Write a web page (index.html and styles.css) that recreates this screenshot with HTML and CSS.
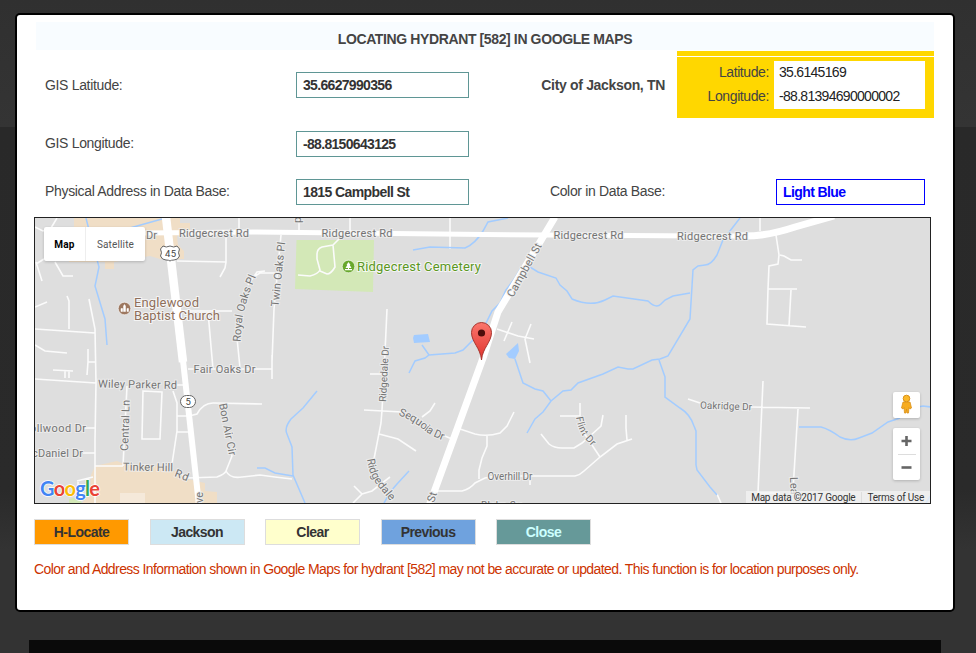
FILE: index.html
```html
<!DOCTYPE html>
<html lang="en">
<head>
<meta charset="utf-8">
<title>Locating Hydrant</title>
<link rel="stylesheet" href="styles.css">
</head>
<body>
<main class="dialog">
  <h1 class="title">LOCATING HYDRANT [582] IN GOOGLE MAPS</h1>
  <div class="form">
    <div class="label first">GIS Latitude:</div>
    <div class="field">35.6627990356</div>
    <div class="label first right city">City of Jackson, TN</div>
    <div class="coords">
      <div class="coords-labels"><span>Latitude:</span><span>Longitude:</span></div>
      <div class="coords-values"><span>35.6145169</span><span>-88.81394690000002</span></div>
    </div>
    <div class="label">GIS Longitude:</div>
    <div class="field">-88.8150643125</div>
    <div></div><div></div>
    <div class="label">Physical Address in Data Base:</div>
    <div class="field words">1815 Campbell St</div>
    <div class="label right">Color in Data Base:</div>
    <div class="field words color">Light Blue</div>
  </div>

  <section class="map">
    <svg class="map-canvas" viewBox="35 218 895 285" width="895" height="285">
      <rect x="35" y="218" width="895" height="285" fill="#dedede"/>
      <g fill="#f0dec6">
        <path d="M74 218H180V223H190V232L177 236L178 245L184 251V259L160 259L150 256L114 262V269H105V262H69V256H74Z"/>
        <path d="M91 475L95 466L117 461L124 464L160 466L180 473L188 479L205 483V491L217 492V503H82L90 494Z"/>
      </g>
      <path d="M120 493H145V503H120Z" fill="#f5e9da"/>
      <path d="M296.500 240H374L373 292L295 289ZM69 499L78 497L82 503H69Z" fill="#d3e8b7"/>
      <g class="minor">
        <path d="M57 218L51 228L43 231L35 227M36 264L44 259M36 262L42 281M55 262L63 276H73M35 307L47 302M67 296L69 301V329M35 329L95 333M89 299L95 329L96 383L95 440V503M35 345L45 351L67 353M88 349V362L87 375M88 362H95M53 370L73 371M65 371V378M69 371V378M35 379L96 383M177 385H184M83 428H95M83 453H95"/>
        <path d="M143 391L162 392L160 439L142 439ZM127 386L123 466M173 391L177 403V431L172 464M177 416H188M177 432H189M189 416L197 414Q203 403 213 403L262 404M95 466H123M180 473L187 478L217 477Q225 474 226 471L232 456L230 448M226 471Q230 479 242 477L260 475L275 477L292 479M77 481L93 477M78 482V490L86 496"/>
        <path d="M177 261L226 262V237M226 262L225 268L220 277M239 218V232M265 271L257 272L248 285M237 338L240 368M183 311H232M208 312L213 369M188 369H272M272 355V379M281 235L274 309L272 362M255 276L260 273H275M299 218V232M350 218V231M450 218V249"/>
        <path d="M339 239L333 245L322 247Q317 249 317 254V259L320 270Q318 274 310 276L298 275M333 245L335 267Q331 274 327 274L320 271"/>
        <path d="M387 309L384 374L382 410L381 423L374 459M370 374H382M364 410L402 412M379 434L398 439L416 451M440 434L452 439M435 403L430 411L422 417M354 486L362 494L353 503M362 494L372 491L390 477"/>
        <path d="M497 329L518 336L534 339M512 322L504 341M531 324L525 339L530 363M460 429L475 434Q487 437 500 433L507 426L514 412M487 436V446L482 458L479 470V479M435 491H462Q470 489 475 483L485 478L496 476H575Q580 475 584 471L600 457L617 444L632 439M626 415V428L627 440M530 476V485M600 457L582 430M541 434L549 444Q554 448 562 448H574L582 443L590 436L601 426L603 415M560 416H580V403"/>
        <path d="M688 399L700 403M760 218V231M776 235L779 255L778 264L769 266L768 289L767 324L806 327M780 255L784 256L791 260H802M768 289H797M791 290L789 326M763 381L758 493L780 493M750 407L810 408M798 409L793 490M717 494L721 503"/>
      </g>
      <g class="water">
        <path d="M86 218L89 230L99 267L95 286L105 319L107 345M112 233L162 219M317 391L303 408L291 419Q284 428 287 434L292 447L293 475L305 503M257 468H265L275 473L293 476M409 471L397 484L391 491L384 503"/>
        <path d="M413 250L430 247L465 248Q475 244 483 231L488 222L508 218M409 373L415 361L425 358L429 355L455 353L463 350L473 340L486 323L492 311L500 303L506 290L515 278L521 268L530 267L538 272L556 278L560 285L567 291L572 299Q591 307 605 300L613 296L648 301Q656 309 661 304L665 300L673 296L690 293M422 345L429 355"/>
        <path d="M740 218L723 240L717 255Q711 265 705 265L698 266L693 270L690 319L668 356L660 359L652 360L633 369H628L618 367L603 374L578 383L571 390L563 391L551 401L543 412L535 419L527 433M515 359L523 383L535 389L543 391L551 401M659 360L665 377V397L680 408Q690 414 694 426L696 431L696 465L697 470L710 487L717 495M799 427H821Q829 429 840 437Q850 442 859 438L872 433L888 422L900 418M918 407L923 406L931 407M926 503L930 496"/>
      </g>
      <path d="M414 335L428 334L430 342L414 343L413 338ZM506 354L518 343L519 351L515 359L509 358Z" fill="#a3ccff"/>
      <g class="major">
        <path d="M145 233L255 232L485 234.600L705 236L758 236" stroke-width="5"/>
        <path d="M740 236Q765 237 795 227L834 216" stroke-width="7"/>
        <path d="M166 217L183 362" stroke-width="8.500"/>
        <path d="M182.500 356L199 505" stroke-width="6"/>
        <path d="M555 217L498 312L483 358L429 506" stroke-width="7"/>
      </g>
      <g class="shield">
        <path d="M163 246Q166 248 170 246Q174 248 177 246L179.500 249Q177.500 253 179.500 256Q178 260 174 260Q171 260 170 261Q169 260 166 260Q162 260 160.500 256Q162.500 253 160.500 249Z"/>
        <rect x="180.500" y="395.500" width="15" height="12" rx="6"/>
      </g>
      <g class="route">
        <text x="165" y="257" textLength="11">45</text>
        <text x="185.500" y="405">5</text>
      </g>
      <g class="road-label">
        <text x="146" y="238.500" textLength="11">Dr</text>
        <text x="179" y="236.500" textLength="70">Ridgecrest Rd</text>
        <text x="321.500" y="237" textLength="71">Ridgecrest Rd</text>
        <text x="553.500" y="239" textLength="70">Ridgecrest Rd</text>
        <text x="677" y="240" textLength="71">Ridgecrest Rd</text>
        <text x="98" y="387.500" textLength="79" transform="rotate(1 98 388)">Wiley Parker Rd</text>
        <text x="193.500" y="373" textLength="62">Fair Oaks Dr</text>
        <text x="30" y="431.500" textLength="56">ollwood Dr</text>
        <text x="32" y="456.500" textLength="51">cDaniel Dr</text>
        <text x="123" y="470.500" textLength="50" transform="rotate(1 123 471)">Tinker Hill</text>
        <text x="174" y="476" textLength="14" transform="rotate(22 174 476)">Rd</text>
        <text transform="translate(128 451) rotate(-88)" textLength="51">Central Ln</text>
        <text transform="translate(219 404) rotate(79)" textLength="53">Bon Air Cir</text>
        <text transform="translate(278.500 307) rotate(-84)" textLength="65">Twin Oaks Pl</text>
        <text><textPath href="#royal-oaks" textLength="68">Royal Oaks Pl</textPath></text>
        <text transform="translate(301 223) rotate(-90)">p</text>
        <text class="small" transform="translate(386 402) rotate(-87)" textLength="56">Ridgedale Dr</text>
        <text><textPath href="#ridgedale" textLength="49">Ridgedale</textPath></text>
        <text><textPath href="#sequoia" textLength="52">Sequoia Dr</textPath></text>
        <text transform="translate(513 298) rotate(-61)" textLength="60">Campbell St</text>
        <text transform="translate(434 503) rotate(-72)">St</text>
        <text transform="translate(203 503) rotate(-90)" x="-6">ave</text>
        <text class="small"><textPath href="#flint" textLength="34">Flint Dr</textPath></text>
        <text class="small" x="487.500" y="480" textLength="45">Overhill Dr</text>
        <text class="small" x="481" y="509" textLength="40">Blake Cv</text>
        <text class="small" x="700" y="408.500" textLength="52" transform="rotate(2 700 408)">Oakridge Dr</text>
        <text transform="translate(790 477) rotate(88)">Lea</text>
      </g>
      <g class="place">
        <text x="134" y="307" textLength="65" fill="#8f6f5b">Englewood</text>
        <text x="134" y="320" textLength="86" fill="#8f6f5b">Baptist Church</text>
        <text x="357" y="271" textLength="124" fill="#5b9722">Ridgecrest Cemetery</text>
      </g>
      <circle cx="124.500" cy="308.500" r="6.300" fill="#9d7860" stroke="#fff" stroke-opacity=".6"/>
      <path d="M121 311.500V308.500H122.500V311.500ZM123.500 311.500V306L124.500 304.500L125.500 306V311.500ZM127 311.500V308.500H128.500V311.500Z" fill="#fff" stroke="#fff" stroke-width=".5"/>
      <circle cx="348.500" cy="266.500" r="6.300" fill="#68a82c" stroke="#fff" stroke-opacity=".6"/>
      <path d="M348.500 262L350.500 265H349.700L351.500 268H345.500L347.300 265H346.500ZM348 268H349V269H352V270.300H345V269H348Z" fill="#fff"/>
      <path d="M481.500 360C480.500 348 471.500 342 471.500 332.500A10 10 0 0 1 491.500 332.500C491.500 342 482.500 348 481.500 360Z" fill="url(#pin)" stroke="#a8352e"/>
      <circle cx="481.500" cy="333" r="3.600" fill="#4e0d0b"/>
      <text class="google" x="40" y="496" textLength="60"><tspan fill="#4285f4">G</tspan><tspan fill="#ea4335">o</tspan><tspan fill="#fbbc05">o</tspan><tspan fill="#4285f4">g</tspan><tspan fill="#34a853">l</tspan><tspan fill="#ea4335">e</tspan></text>
      <defs>
        <linearGradient id="pin" x1="0" y1="0" x2="0" y2="1"><stop offset="0" stop-color="#fb766d"/><stop offset="1" stop-color="#df312b"/></linearGradient>
        <path id="royal-oaks" d="M240.500 342L242 322Q244 305 257 274"/>
        <path id="ridgedale" d="M367 459Q369 475 378 486L396 508"/>
        <path id="sequoia" d="M398 415Q414 421 424 430Q432 437 448 442"/>
        <path id="flint" d="M576 417Q578 431 586 440L598 453"/>
      </defs>
    </svg>
    <div class="map-types"><b>Map</b><span>Satellite</span></div>
    <div class="map-controls">
      <div class="control">
        <svg width="27" height="26" viewBox="0 0 26 26"><circle cx="13" cy="6.500" r="3.300" fill="#fbb829" stroke="#d99119"/><path d="M9.500 10H16.500L18 16L16.500 17L15.500 15.500L15 21H13.500L13 17L12.500 21H11L10.500 15.500L9.500 17L8 16Z" fill="#f7ac20" stroke="#d99119" stroke-width=".8"/></svg>
      </div>
      <div class="control zoom">
        <svg width="27" height="26" viewBox="0 0 26 26"><path d="M8 13H18M13 8V18" stroke="#666" stroke-width="2.600"/></svg>
        <hr>
        <svg width="27" height="25" viewBox="0 0 26 25"><path d="M8 12.500H18" stroke="#666" stroke-width="2.600"/></svg>
      </div>
    </div>
    <div class="attribution"><span>Map data ©2017 Google</span><span>Terms of Use</span></div>
  </section>

  <div class="buttons">
    <button class="locate">H-Locate</button>
    <button class="jackson">Jackson</button>
    <button class="clear">Clear</button>
    <button class="previous">Previous</button>
    <button class="close">Close</button>
  </div>
  <p class="notice">Color and Address Information shown in Google Maps for hydrant [582] may not be accurate or updated. This function is for location purposes only.</p>
</main>
<footer class="footer"></footer>
</body>
</html>
```
FILE: styles.css
```css
* { box-sizing: border-box; }
html { background: #333; }
body {
  margin: 0;
  height: 653px;
  overflow: hidden;
  padding: 13px 21px 0 15px;
  font: 14px/16px "Liberation Sans", Arial, sans-serif;
  color: #444;
  background: linear-gradient(#303030 0, #343434 127px, #292929 127px, #2a2a2a 490px, #333 550px, #333 100%);
}
.dialog {
  width: 940px;
  height: 599px;
  padding: 7px 19px 0;
  background: #fff;
  border: 2px solid #000;
  border-radius: 5px;
}
.title {
  margin: 0;
  height: 28px;
  padding-top: 9px;
  background: #f8fcff;
  text-align: center;
  font-size: 14px;
  line-height: 16px;
  letter-spacing: -0.38px;
}
.form {
  display: grid;
  grid-template-columns: 260px 173px 196px 269px;
  grid-template-rows: 67px 52px 44px;
  align-items: center;
  padding-top: 1px;
}
.label { padding: 0 0 2px 9px; letter-spacing: -0.33px; }
.first { padding-bottom: 0; }
.right { text-align: right; }
.city { font-weight: bold; }
.field {
  height: 26px;
  padding: 3px 6px;
  border: 1px solid #5f9695;
  line-height: 18px;
  font-weight: bold;
  letter-spacing: -0.68px;
  color: #333;
}
.field.words { letter-spacing: -0.6px; }
.field.color {
  width: 149px;
  margin-left: 111px;
  border-color: #00f;
  color: #00f;
}
.coords {
  display: flex;
  align-self: stretch;
  margin-left: 12px;
  padding: 10px 9px 9px 0;
  background: linear-gradient(#ffd700 5px, #fff 5px, #fff 6px, #ffd700 6px);
  line-height: 24px;
}
.coords span { display: block; position: relative; top: -1px; }
.coords-labels { width: 92px; text-align: right; letter-spacing: -0.4px; }
.coords-values {
  flex: 1;
  margin-left: 5px;
  padding-left: 5px;
  background: #fff;
  color: #222;
  letter-spacing: -0.7px;
}
.map {
  position: relative;
  width: 897px;
  height: 287px;
  margin: 3px 0 0 -2px;
  border: 1px solid #222;
  overflow: hidden;
  font-family: Roboto, sans-serif;
}
.map-canvas { display: block; }
.minor path { fill: none; stroke: #fbfbfb; stroke-width: 1.6; }
.water path { fill: none; stroke: #a3ccff; stroke-width: 1.5; }
.major path { fill: none; stroke: #fff; }
.shield > * { fill: #fff; stroke: #666; }
.route text { font-size: 9.5px; fill: #444; }
.road-label text {
  font-size: 11px;
  fill: #747474;
  stroke: #eee;
  stroke-width: 2px;
  stroke-opacity: .8;
  paint-order: stroke;
}
.road-label .small { font-size: 10px; }
.place text { font-size: 13px; stroke: #fff; stroke-opacity: .7; stroke-width: 2px; paint-order: stroke; }
.google { font: 700 20px Lato, sans-serif; stroke: #fff; stroke-width: 1.5px; paint-order: stroke; }
.map-types {
  position: absolute;
  left: 9px;
  top: 9px;
  display: flex;
  height: 34px;
  background: #fff;
  border-radius: 2px;
  box-shadow: 0 1px 3px rgba(0, 0, 0, .2);
  font-size: 10px;
  line-height: 35px;
  color: #555;
  text-align: center;
}
.map-types b { width: 42px; color: #000; letter-spacing: .2px; border-right: 1px solid #eee; }
.map-types span { width: 59px; letter-spacing: .15px; }
.map-controls { position: absolute; right: 10px; bottom: 23px; }
.control { width: 27px; height: 26px; background: #fff; border-radius: 2px; box-shadow: 0 1px 3px rgba(0, 0, 0, .2); }
.control svg { display: block; }
.zoom { margin-top: 10px; height: 52px; }
.zoom hr { width: 18px; height: 1px; margin: 0 auto; border: 0; background: #ddd; }
.attribution {
  position: absolute;
  right: 0;
  bottom: 0;
  display: flex;
  background: rgba(245, 245, 245, .7);
  font-size: 10px;
  line-height: 11px;
  padding-top: 1px;
  color: #333;
  letter-spacing: -0.22px;
}
.attribution span { padding: 0 6px 0 5px; white-space: nowrap; }
.attribution span + span { border-left: 1px solid #ddd; }
.buttons { display: flex; gap: 20.5px; margin: 15px 0 0 -2px; }
.buttons button {
  width: 95px;
  height: 26px;
  padding: 0;
  border: 1px solid #ddd;
  font: bold 14px/16px "Liberation Sans", Arial, sans-serif;
  letter-spacing: -0.55px;
  color: #333;
}
.buttons .locate { background: #ff9900; }
.buttons .jackson { background: #cce8f4; }
.buttons .clear { background: #ffffcc; }
.buttons .previous { background: #6fa2de; }
.buttons .close { background: #669999; color: #ccffff; }
.notice { margin: 16px 0 0 -2px; color: #cc3300; white-space: nowrap; letter-spacing: -0.59px; }
.footer { width: 912px; height: 20px; margin: 28px 0 0 14px; background: #0a0a0a; }
```
